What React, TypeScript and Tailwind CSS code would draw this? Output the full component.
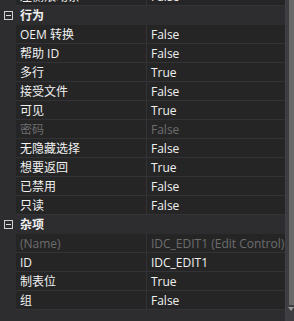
type Row =
  | { kind: "cat"; label: string }
  | { kind: "prop"; name: string; value: string; muted?: boolean };

const rows: Row[] = [
  { kind: "prop", name: "左侧滚动条", value: "False" },
  { kind: "cat", label: "行为" },
  { kind: "prop", name: "OEM 转换", value: "False" },
  { kind: "prop", name: "帮助 ID", value: "False" },
  { kind: "prop", name: "多行", value: "True" },
  { kind: "prop", name: "接受文件", value: "False" },
  { kind: "prop", name: "可见", value: "True" },
  { kind: "prop", name: "密码", value: "False", muted: true },
  { kind: "prop", name: "无隐藏选择", value: "False" },
  { kind: "prop", name: "想要返回", value: "True" },
  { kind: "prop", name: "已禁用", value: "False" },
  { kind: "prop", name: "只读", value: "False" },
  { kind: "cat", label: "杂项" },
  { kind: "prop", name: "(Name)", value: "IDC_EDIT1 (Edit Control)", muted: true },
  { kind: "prop", name: "ID", value: "IDC_EDIT1" },
  { kind: "prop", name: "制表位", value: "True" },
  { kind: "prop", name: "组", value: "False" },
];

const CollapseBox = () => (
  <div className="relative flex size-[9px] items-center justify-center border border-[#d0d0d0]">
    <div className="h-px w-[5px] bg-[#e0e0e0]" />
  </div>
);

export default function App() {
  return (
    <div
      className="flex h-[321px] w-[294px] overflow-hidden bg-[#2d2d30] text-[12px] text-[#f1f1f1]"
      style={{ fontFamily: '"Open Sans", "Noto Sans CJK SC", sans-serif' }}
    >
      <div className="flex w-[285px] flex-col">
        <div className="-mt-[13px] flex flex-col">
          {rows.map((r, i) =>
            r.kind === "cat" ? (
              <div key={i} className="flex h-[19px] items-center bg-[#2d2d30]">
                <div className="flex w-[16px] justify-center pl-[1px]">
                  <CollapseBox />
                </div>
                <span className="pl-[4px] pt-[1px] font-bold leading-none">{r.label}</span>
              </div>
            ) : (
              <div key={i} className="flex h-[19px]">
                <div className="w-[16px] shrink-0 bg-[#2d2d30]" />
                <div
                  className={`flex w-[131px] shrink-0 items-center border-r border-b border-[#333337] bg-[#252526] pl-[4px] pt-[1px] leading-none ${
                    r.muted ? "text-[#6d6d6d]" : ""
                  }`}
                >
                  {r.name}
                </div>
                <div
                  className={`flex min-w-0 flex-1 items-center overflow-hidden border-b border-[#333337] bg-[#252526] pl-[4px] pt-[1px] leading-none whitespace-nowrap ${
                    r.muted ? "text-[#6d6d6d]" : ""
                  }`}
                >
                  {r.value}
                </div>
              </div>
            )
          )}
        </div>
      </div>
      <div className="w-px bg-[#3f3f46]" />
      <div className="flex w-[8px] flex-col bg-[#3e3e42]">
        <div className="flex flex-1 justify-end">
          <div className="mb-[1px] w-[5px] bg-[#686868]" />
        </div>
        <div className="flex h-[15px] justify-end">
          <svg width="6" height="6" viewBox="0 0 6 6" className="mt-[1px]">
            <path d="M0 0 L6 0 L3 4 Z" fill="#999999" />
          </svg>
        </div>
      </div>
    </div>
  );
}
